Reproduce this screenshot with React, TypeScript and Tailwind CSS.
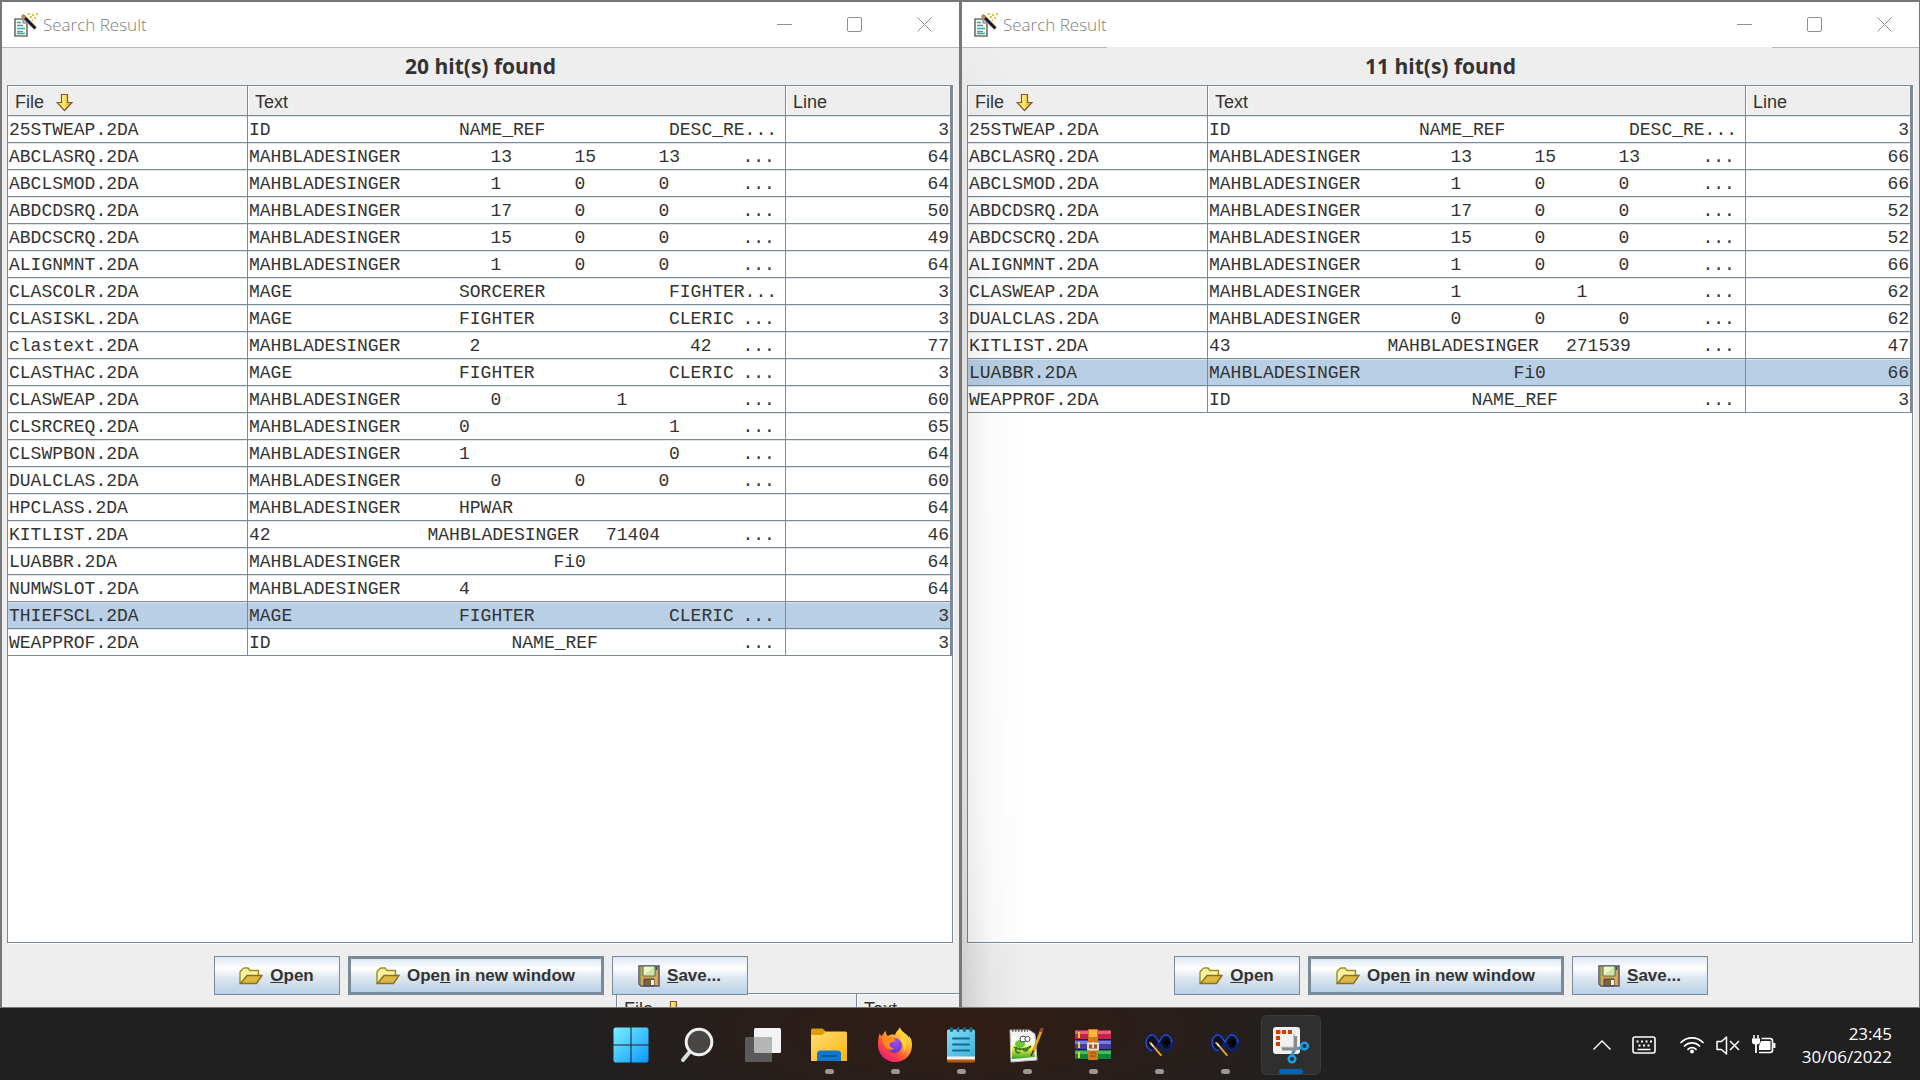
import type { ReactNode } from "react";

type Token = [column: number, text: string];
type Hit = { file: string; tokens: Token[]; line: number; selected?: boolean };

const MAHB: Token = [0, "MAHBLADESINGER"];
const MORE: Token = [47, "..."];

const leftHits: Hit[] = [
  { file: "25STWEAP.2DA", tokens: [[0, "ID"], [20, "NAME_REF"], [40, "DESC_RE..."]], line: 3 },
  { file: "ABCLASRQ.2DA", tokens: [MAHB, [23, "13"], [31, "15"], [39, "13"], MORE], line: 64 },
  { file: "ABCLSMOD.2DA", tokens: [MAHB, [23, "1"], [31, "0"], [39, "0"], MORE], line: 64 },
  { file: "ABDCDSRQ.2DA", tokens: [MAHB, [23, "17"], [31, "0"], [39, "0"], MORE], line: 50 },
  { file: "ABDCSCRQ.2DA", tokens: [MAHB, [23, "15"], [31, "0"], [39, "0"], MORE], line: 49 },
  { file: "ALIGNMNT.2DA", tokens: [MAHB, [23, "1"], [31, "0"], [39, "0"], MORE], line: 64 },
  { file: "CLASCOLR.2DA", tokens: [[0, "MAGE"], [20, "SORCERER"], [40, "FIGHTER..."]], line: 3 },
  { file: "CLASISKL.2DA", tokens: [[0, "MAGE"], [20, "FIGHTER"], [40, "CLERIC"], MORE], line: 3 },
  { file: "clastext.2DA", tokens: [MAHB, [21, "2"], [42, "42"], MORE], line: 77 },
  { file: "CLASTHAC.2DA", tokens: [[0, "MAGE"], [20, "FIGHTER"], [40, "CLERIC"], MORE], line: 3 },
  { file: "CLASWEAP.2DA", tokens: [MAHB, [23, "0"], [35, "1"], MORE], line: 60 },
  { file: "CLSRCREQ.2DA", tokens: [MAHB, [20, "0"], [40, "1"], MORE], line: 65 },
  { file: "CLSWPBON.2DA", tokens: [MAHB, [20, "1"], [40, "0"], MORE], line: 64 },
  { file: "DUALCLAS.2DA", tokens: [MAHB, [23, "0"], [31, "0"], [39, "0"], MORE], line: 60 },
  { file: "HPCLASS.2DA", tokens: [MAHB, [20, "HPWAR"]], line: 64 },
  { file: "KITLIST.2DA", tokens: [[0, "42"], [17, "MAHBLADESINGER"], [34, "71404"], MORE], line: 46 },
  { file: "LUABBR.2DA", tokens: [MAHB, [29, "Fi0"]], line: 64 },
  { file: "NUMWSLOT.2DA", tokens: [MAHB, [20, "4"]], line: 64 },
  { file: "THIEFSCL.2DA", tokens: [[0, "MAGE"], [20, "FIGHTER"], [40, "CLERIC"], MORE], line: 3, selected: true },
  { file: "WEAPPROF.2DA", tokens: [[0, "ID"], [25, "NAME_REF"], MORE], line: 3 },
];

const rightHits: Hit[] = [
  { file: "25STWEAP.2DA", tokens: [[0, "ID"], [20, "NAME_REF"], [40, "DESC_RE..."]], line: 3 },
  { file: "ABCLASRQ.2DA", tokens: [MAHB, [23, "13"], [31, "15"], [39, "13"], MORE], line: 66 },
  { file: "ABCLSMOD.2DA", tokens: [MAHB, [23, "1"], [31, "0"], [39, "0"], MORE], line: 66 },
  { file: "ABDCDSRQ.2DA", tokens: [MAHB, [23, "17"], [31, "0"], [39, "0"], MORE], line: 52 },
  { file: "ABDCSCRQ.2DA", tokens: [MAHB, [23, "15"], [31, "0"], [39, "0"], MORE], line: 52 },
  { file: "ALIGNMNT.2DA", tokens: [MAHB, [23, "1"], [31, "0"], [39, "0"], MORE], line: 66 },
  { file: "CLASWEAP.2DA", tokens: [MAHB, [23, "1"], [35, "1"], MORE], line: 62 },
  { file: "DUALCLAS.2DA", tokens: [MAHB, [23, "0"], [31, "0"], [39, "0"], MORE], line: 62 },
  { file: "KITLIST.2DA", tokens: [[0, "43"], [17, "MAHBLADESINGER"], [34, "271539"], MORE], line: 47 },
  { file: "LUABBR.2DA", tokens: [MAHB, [29, "Fi0"]], line: 66, selected: true },
  { file: "WEAPPROF.2DA", tokens: [[0, "ID"], [25, "NAME_REF"], MORE], line: 3 },
];

/* ---------- window icons ---------- */

function AppIcon() {
  return (
    <svg width="24" height="24" viewBox="0 0 24 24" aria-hidden="true">
      <path d="M1 6h8l4 4v13H1z" fill="#fdfdfd" stroke="#6f7068" strokeWidth="1.6" />
      <path d="M9 6v4h4" fill="#d8d8d0" stroke="#6f7068" />
      <path d="M3 9.500h4M3 12.500h6M3 15.500h8M3 18.500h6M3 20.500h8" stroke="#3fa7a0" strokeWidth="1.300" />
      <path d="M8.500 2.500L21 15" stroke="#b9bcc4" strokeWidth="4" />
      <path d="M8.500 2.500L21.500 15.500" stroke="#1b1b20" strokeWidth="2.800" />
      <path d="M8 2l3 3" stroke="#c98a54" strokeWidth="2.800" />
      <path d="M14 1h2M18 2h2M22 1h2M16 4h2M20 5h2M18 7h1" stroke="#e6bf2c" strokeWidth="2" />
    </svg>
  );
}

function SortArrow() {
  return (
    <svg width="18" height="19" viewBox="0 0 18 19" aria-hidden="true">
      <defs>
        <linearGradient id="sortFill" x1="0" x2="1">
          <stop offset="0" stopColor="#f0c020" />
          <stop offset=".4" stopColor="#fff27a" />
          <stop offset="1" stopColor="#d99a10" />
        </linearGradient>
      </defs>
      <path d="M5.500 1.500h6v8h4.500L8.500 17.500 1 9.500h4.500z" fill="url(#sortFill)" stroke="#8a5a2c" strokeWidth="1.200" />
    </svg>
  );
}

function FolderIcon() {
  return (
    <svg width="24" height="18" viewBox="0 0 24 18" aria-hidden="true">
      <path d="M1 16V5l2.500-3L5 1h4l2 2.500h8.500V8L3.500 16z" fill="#fdf0a0" stroke="#96901c" strokeWidth="1.400" />
      <path d="M1.500 16.500L8 8.500h15l-5.500 8z" fill="#deb83e" stroke="#84702a" strokeWidth="1.400" />
    </svg>
  );
}

function FloppyIcon() {
  return (
    <svg width="22" height="22" viewBox="0 0 22 22" aria-hidden="true">
      <path d="M1 1h20v20H3l-2-2z" fill="#d8a850" stroke="#57506a" strokeWidth="1.500" />
      <path d="M2 2v17" stroke="#6f8f50" strokeWidth="1.500" />
      <path d="M5 1h12v10H5z" fill="#eef5cf" stroke="#4c6a48" />
      <path d="M6 10l10-8v8z" fill="#d5e4a4" />
      <path d="M18.500 2v3" stroke="#3f3a5a" strokeWidth="1.500" />
      <path d="M6 14h10v7H6z" fill="#7d6240" stroke="#4d4050" />
      <path d="M13 15h3v5h-3z" fill="#f3efe2" />
    </svg>
  );
}

/* ---------- search window ---------- */

const HEAD_CELL =
  "border-r border-b border-[#7a8a99] bg-[#eeeeee] pt-[3px] pb-0 pl-[7px] text-left align-middle text-[18px] leading-[24px] font-normal text-[#333333] shadow-[inset_1px_1px_0_#ffffff]";
const BODY_CELL =
  "h-[27px] border-r border-b border-[#7a8a99] px-0 pt-[2px] pb-0 align-middle leading-[24px] shadow-[inset_0_1px_0_#dfe4e9]";

function HitTable({ hits }: { hits: Hit[] }) {
  return (
    <table className="w-full table-fixed border-separate border-spacing-0 border-r border-[#7a8a99]">
      <colgroup>
        <col className="w-[240px]" />
        <col />
        <col className="w-[165px]" />
      </colgroup>
      <thead>
        <tr className="h-[30px]">
          <th scope="col" className={HEAD_CELL}>
            <span className="flex items-center gap-3">
              File
              <SortArrow />
            </span>
          </th>
          <th scope="col" className={HEAD_CELL}>Text</th>
          <th scope="col" className={HEAD_CELL}>Line</th>
        </tr>
      </thead>
      <tbody className="font-['Liberation_Mono',monospace] text-[18px] text-[#333333]">
        {hits.map((hit) => (
          <tr key={hit.file} className={hit.selected ? "bg-[#b8cfe5]" : "bg-white"}>
            <td className={BODY_CELL}>
              <span className="pl-px">{hit.file}</span>
            </td>
            <td className={BODY_CELL}>
              <div className="grid grid-cols-[repeat(50,minmax(0,1fr))] pr-[11px] pl-px">
                {hit.tokens.map(([column, text]) => (
                  <span
                    key={column}
                    className="row-start-1 whitespace-pre"
                    style={{ gridColumnStart: column + 1, gridColumnEnd: column + 1 + Math.min(text.length, 50 - column) }}
                  >
                    {text}
                  </span>
                ))}
              </div>
            </td>
            <td className={BODY_CELL}>
              <div className="pr-px text-right">{hit.line}</div>
            </td>
          </tr>
        ))}
      </tbody>
    </table>
  );
}

function SwingButton({
  icon,
  children,
  size,
}: {
  icon: ReactNode;
  children: ReactNode;
  size: "min-w-[126px] border" | "min-w-[256px] border-3" | "min-w-[136px] border";
}) {
  return (
    <button
      type="button"
      className={
        "flex h-[39px] items-center justify-center gap-[7px] border-[#7a8a99] bg-[linear-gradient(#dde8f3_0%,#ffffff_30%,#dfe8f2_55%,#b8cfe5_100%)] px-5 pt-px text-[17px] font-bold whitespace-nowrap text-[#333333] " +
        size
      }
    >
      {icon}
      <span>{children}</span>
    </button>
  );
}

function SearchWindow({ count, hits, overlapped }: { count: number; hits: Hit[]; overlapped?: boolean }) {
  return (
    <section className="relative flex min-w-0 flex-col border-t-2 border-r border-b border-l-2 border-[#777777] bg-[#eeeeee]">
      <header className="flex h-[45px] shrink-0 items-center bg-white pl-3">
        <AppIcon />
        <h1 className="flex-1 pl-[5px] font-['Open_Sans',sans-serif] text-[17px] font-light text-[#808080]">Search Result</h1>
        <button type="button" aria-label="Minimize" className="flex h-full w-[70px] items-center justify-center">
          <svg width="15" height="15" viewBox="0 0 15 15"><path d="M0 7.500h15" stroke="#8f8f8f" /></svg>
        </button>
        <button type="button" aria-label="Maximize" className="flex h-full w-[70px] items-center justify-center">
          <svg width="15" height="15" viewBox="0 0 15 15"><rect x=".5" y=".5" width="14" height="14" rx="1.500" fill="none" stroke="#8f8f8f" /></svg>
        </button>
        <button type="button" aria-label="Close" className="flex h-full w-[70px] items-center justify-center">
          <svg width="15" height="15" viewBox="0 0 15 15"><path d="M.5.5l14 14M14.500.5l-14 14" stroke="#8f8f8f" /></svg>
        </button>
      </header>
      {overlapped ? (
        <div className="flex h-px shrink-0 justify-between">
          <span className="w-[145px] bg-[#b9b9b9]" />
          <span className="w-[147px] bg-[#b9b9b9]" />
        </div>
      ) : (
        <div className="h-px shrink-0 bg-[#b9b9b9]" />
      )}

      <h2 className="flex h-[37px] shrink-0 items-center justify-center font-['Open_Sans',sans-serif] text-[21px] font-bold text-[#333333]">
        {count} hit(s) found
      </h2>

      <div className="mr-[6px] ml-[5px] min-h-0 flex-1 border border-[#7a8a99] bg-white shadow-[1px_1px_0_#ffffff]">
        <HitTable hits={hits} />
      </div>

      <div className="relative flex h-16 shrink-0 items-start justify-center pt-[13px]">
        {!overlapped && (
          <div className="absolute right-0 bottom-0 left-[614px] flex h-[14px] overflow-hidden border-t border-l border-[#7a8a99] text-[18px] text-[#333333]">
            <div className="flex h-[30px] w-[240px] shrink-0 items-center gap-3 border-r border-[#7a8a99] pl-[7px] shadow-[inset_1px_1px_0_#ffffff]">
              File
              <SortArrow />
            </div>
            <div className="flex h-[30px] flex-1 items-center pl-[7px] shadow-[inset_1px_1px_0_#ffffff]">Text</div>
          </div>
        )}
        <div className="relative flex gap-2">
          <SwingButton icon={<FolderIcon />} size="min-w-[126px] border"><u>O</u>pen</SwingButton>
          <SwingButton icon={<FolderIcon />} size="min-w-[256px] border-3">Ope<u>n</u> in new window</SwingButton>
          <SwingButton icon={<FloppyIcon />} size="min-w-[136px] border"><u>S</u>ave...</SwingButton>
        </div>
      </div>

      {overlapped && (
        <div className="pointer-events-none absolute inset-y-0 left-0 w-16 bg-[linear-gradient(to_right,rgba(0,0,0,0.13),rgba(0,0,0,0.03)_45%,transparent)] [mask-image:linear-gradient(to_bottom,transparent,rgba(0,0,0,0.5)_30%,rgba(0,0,0,0.6)_80%,black)]" />
      )}
    </section>
  );
}

/* ---------- taskbar ---------- */

function StartIcon() {
  return (
    <svg width="36" height="36" viewBox="0 0 36 36" aria-hidden="true">
      <defs>
        <linearGradient id="startFill" x1="0" y1="0" x2="36" y2="36" gradientUnits="userSpaceOnUse">
          <stop offset="0" stopColor="#7ff0ff" />
          <stop offset=".5" stopColor="#42c4ff" />
          <stop offset="1" stopColor="#0a94ff" />
        </linearGradient>
      </defs>
      <path d="M2 .5h15.500v17H.5V2zM18.500.5H34L35.500 2v15.500h-17zM.5 18.500h17v17H2L.5 34zM18.500 18.500h17V34L34 35.500H18.500z" fill="url(#startFill)" />
    </svg>
  );
}

function SearchIcon() {
  return (
    <svg width="36" height="36" viewBox="0 0 36 36" aria-hidden="true">
      <path d="M11 24.500L4 33" stroke="#d9dcdf" strokeWidth="4" strokeLinecap="round" />
      <circle cx="20" cy="15" r="12.800" fill="#4a4545" stroke="#f0f0f0" strokeWidth="3" />
    </svg>
  );
}

function TaskViewIcon() {
  return (
    <svg width="36" height="36" viewBox="0 0 36 36" aria-hidden="true">
      <rect x="9" y="1" width="27" height="25" rx="1.500" fill="#f3f3f3" />
      <rect x="0" y="10" width="27" height="25" rx="1.500" fill="#5b5a5a" />
      <path d="M9 10h16.500q1.500 0 1.500 1.500V26H10.500Q9 26 9 24.500z" fill="#b5b5b5" />
    </svg>
  );
}

function ExplorerIcon() {
  return (
    <svg width="36" height="36" viewBox="0 0 36 36" aria-hidden="true">
      <defs>
        <linearGradient id="folderFill" x1="0" y1="0" x2="1" y2="1">
          <stop offset="0" stopColor="#ffdc73" />
          <stop offset="1" stopColor="#f9b710" />
        </linearGradient>
      </defs>
      <path d="M0 3q0-1.500 1.500-1.500h10L15.500 5H20v5H0z" fill="#e09c05" />
      <path d="M0 8h11l4-3.500h19.500Q36 4.500 36 6v28H0z" fill="url(#folderFill)" />
      <path d="M6 34v-7q0-3.500 3.500-3.500h17q3.500 0 3.500 3.500v7z" fill="#0f78cc" />
      <path d="M11 29h14" stroke="#0b4e94" strokeWidth="1.600" strokeLinecap="round" />
    </svg>
  );
}

function FirefoxIcon() {
  return (
    <svg width="36" height="36" viewBox="0 0 36 36" aria-hidden="true">
      <defs>
        <linearGradient id="ffBody" x1="30" y1="3" x2="6" y2="34" gradientUnits="userSpaceOnUse">
          <stop offset="0" stopColor="#fff04a" />
          <stop offset=".35" stopColor="#ffa92c" />
          <stop offset=".65" stopColor="#ff4a3c" />
          <stop offset="1" stopColor="#e31587" />
        </linearGradient>
        <radialGradient id="ffGlobe" cx=".6" cy=".2" r=".9">
          <stop offset="0" stopColor="#a04af0" />
          <stop offset="1" stopColor="#5a35c8" />
        </radialGradient>
      </defs>
      <path d="M23 0c-1 3-4 4-5 8-3-1-6 0-7 1-2-1-2-3-2-5-2 1-3 3-4 5C3 8 3 7 3 6 1 10 1 14 1 18c0 9 7 17 17 17s17-7 17-17c0-4-1-7-3-9 0 1 0 2 .5 3C31 6 24 6 23 0z" fill="url(#ffBody)" />
      <circle cx="17.500" cy="18.500" r="7.500" fill="url(#ffGlobe)" />
      <path d="M5 10c3-1 6 0 7 1 3-1 5 0 6 1 1 2-2 3-5 4-1 3 1 5 4 5-2 3-6 2-8 0-3-3-4-7-4-11z" fill="#ff8a22" />
      <path d="M25 6c6 6 6 14 1 21 2-6 0-11-3-14 1-2 2-4 2-7z" fill="#ffd438" />
    </svg>
  );
}

function NotepadIcon() {
  return (
    <svg width="30" height="36" viewBox="0 0 30 36" aria-hidden="true">
      <defs>
        <linearGradient id="noteFill" x1="0" y1="0" x2="1" y2="1">
          <stop offset="0" stopColor="#86dcf5" />
          <stop offset="1" stopColor="#3fb0d8" />
        </linearGradient>
      </defs>
      <path d="M1 30h28v4q0 1.500-1.500 1.500h-25Q1 35.500 1 34z" fill="#b5560c" />
      <path d="M1 28h28v4.500H1z" fill="#f4f4f4" />
      <path d="M1 4q0-1.500 1.500-1.500h25Q29 2.500 29 4v25.500H1z" fill="url(#noteFill)" />
      <path d="M5.500 1.500v2M12 1.500v2M18.500 1.500v2M25 1.500v2" stroke="#0c6f95" strokeWidth="3" strokeLinecap="round" />
      <path d="M7 11.500h16M7 17.500h16M7 23.500h16" stroke="#0c6f95" strokeWidth="2" strokeLinecap="round" />
    </svg>
  );
}

function NotepadPlusIcon() {
  return (
    <svg width="36" height="36" viewBox="0 0 36 36" aria-hidden="true">
      <defs>
        <linearGradient id="nppFill" x1="0" y1="0" x2="0" y2="1">
          <stop offset=".3" stopColor="#fbfdf2" />
          <stop offset=".55" stopColor="#f0ec4a" />
          <stop offset="1" stopColor="#2f9e2a" />
        </linearGradient>
      </defs>
      <path d="M1 3h19l6 4 2 26-26 2z" fill="#f2f2f2" stroke="#b9b9b9" />
      <path d="M3 9h21l2 21-23 2z" fill="url(#nppFill)" />
      <path d="M3 3.500h16" stroke="#555" strokeWidth="2.500" strokeDasharray="1.500 1.500" />
      <ellipse cx="11" cy="17" rx="5" ry="4" fill="#67c83c" />
      <path d="M5 20c4 3 13 3 17-1M8 20c-3 4 0 7 3 5M14 21c1 4 4 3 5 1" fill="none" stroke="#3d7d25" strokeWidth="2" />
      <circle cx="14" cy="12" r="3" fill="#fff" stroke="#444" />
      <circle cx="18.500" cy="12" r="2.600" fill="#fff" stroke="#444" />
      <path d="M33 2L24 25" stroke="#e4a018" strokeWidth="2.800" />
      <path d="M33.500 1l-1.500 4" stroke="#8d3d4c" strokeWidth="2.800" />
      <path d="M24.500 23.500L22 29" stroke="#3a3226" strokeWidth="1.500" />
    </svg>
  );
}

function WinRarIcon() {
  return (
    <svg width="36" height="32" viewBox="0 0 36 32" aria-hidden="true">
      <rect y="1" width="36" height="10" fill="#c22348" />
      <rect y="2" width="36" height="3" fill="#e8607e" />
      <rect y="11" width="36" height="10" fill="#4140a4" />
      <rect y="12" width="36" height="3" fill="#7d7cdc" />
      <rect y="21" width="36" height="10" fill="#15823a" />
      <rect y="22" width="36" height="3" fill="#48bb62" />
      <path d="M0 10.500h36M0 20.500h36M0 30.500h36" stroke="#1c1c2c" />
      <path d="M4 3v6M4 13v6M4 23v6" stroke="#f5c928" strokeWidth="2" />
      <rect x="13" y="0" width="10" height="31" rx="1" fill="#d07a1c" />
      <path d="M14 1h8v7h-8z" fill="#f3b83c" />
      <rect x="13" y="14.500" width="10" height="6" fill="#a6551a" stroke="#e9e9e9" strokeWidth="1.800" />
      <path d="M18 13v6" stroke="#f4e6c0" strokeWidth="1.800" />
      <path d="M15 24h6M15 27h6" stroke="#8a4a14" />
    </svg>
  );
}

function InfinityIcon() {
  return (
    <svg width="30" height="24" viewBox="0 0 32 26" aria-hidden="true">
      <path d="M16 10C12 3 10.500 2 8.500 2 5 2 2 6 2 10.500S5 19 8.500 19 14 14 16 10s4-8 7.500-8 6.500 4 6.500 8.500-3 8.500-6.500 8.500S18 14 16 10z" fill="#101014" stroke="#0b2170" strokeWidth="3.200" />
      <path d="M16 10C12 3 10.500 2 8.500 2 5 2 2 6 2 10.500S5 19 8.500 19M16 10c2-4 4-8 7.500-8s6.500 4 6.500 8.500" fill="none" stroke="#3f6be0" strokeWidth="1" />
      <path d="M21 10.500h7M24.500 7v7" stroke="#000" strokeWidth="2.400" />
      <path d="M7 11l11 13" stroke="#e9a72c" strokeWidth="2" strokeLinecap="round" />
      <path d="M6.500 10.500l3 3.500" stroke="#f7f1dc" strokeWidth="1.800" strokeLinecap="round" />
      <path d="M6.500 10.500h1" stroke="#d33" strokeWidth="1.500" />
    </svg>
  );
}

function SnipIcon() {
  return (
    <svg width="38" height="38" viewBox="0 0 38 38" aria-hidden="true">
      <rect x="1" y="1" width="27" height="27" rx="3" fill="#f2f1f1" />
      <path d="M4 4h4.500v4H4zM10 4h4v4h-4zM16 4h4v4h-4zM4 10h4v4H4zM4 16h4v4H4z" fill="#d83b01" />
      <path d="M22 8v14M9 21.500h12" stroke="#c9c9c9" strokeWidth="2" fill="none" />
      <path d="M23.500 10v12q-1 2-3 6M10 23h13l6-1" stroke="#858b92" strokeWidth="3.200" fill="none" />
      <circle cx="32.500" cy="20" r="3.300" fill="none" stroke="#1e9de4" strokeWidth="2.400" />
      <circle cx="20" cy="33" r="3.300" fill="none" stroke="#1e9de4" strokeWidth="2.400" />
      <path d="M20 29.500l1.500-4M26 22l3.500-.5" stroke="#1e9de4" strokeWidth="2.200" />
    </svg>
  );
}

type App = { name: string; icon: ReactNode; state: "idle" | "running" | "active" };

const apps: App[] = [
  { name: "Start", icon: <StartIcon />, state: "idle" },
  { name: "Search", icon: <SearchIcon />, state: "idle" },
  { name: "Task View", icon: <TaskViewIcon />, state: "idle" },
  { name: "File Explorer", icon: <ExplorerIcon />, state: "running" },
  { name: "Firefox", icon: <FirefoxIcon />, state: "running" },
  { name: "Notepad", icon: <NotepadIcon />, state: "running" },
  { name: "Notepad++", icon: <NotepadPlusIcon />, state: "running" },
  { name: "WinRAR", icon: <WinRarIcon />, state: "running" },
  { name: "Near Infinity", icon: <InfinityIcon />, state: "running" },
  { name: "Near Infinity, second window", icon: <InfinityIcon />, state: "running" },
  { name: "Snipping Tool", icon: <SnipIcon />, state: "active" },
];

function TaskbarButton({ app }: { app: App }) {
  return (
    <button
      type="button"
      aria-label={app.name}
      className={
        "relative mx-[3px] flex h-[60px] w-[60px] items-center justify-center rounded-md " +
        (app.state === "active" ? "border border-[#3d3c3c] bg-[#2f2f2f]" : "")
      }
    >
      {app.icon}
      {app.state === "running" && <span className="absolute bottom-px h-[5px] w-[9px] rounded-full bg-[#9b9796]" />}
      {app.state === "active" && <span className="absolute bottom-0 h-[5px] w-6 rounded-full bg-[#0063b5]" />}
    </button>
  );
}

function Tray() {
  return (
    <div className="flex items-center justify-end pr-7 text-white">
      <button type="button" aria-label="Show hidden icons">
        <svg width="18" height="24" viewBox="0 0 18 24"><path d="M.5 16.500L9 8l8.500 8.500" fill="none" stroke="currentColor" strokeWidth="1.400" /></svg>
      </button>
      <button type="button" aria-label="Touch keyboard" className="ml-[21px]">
        <svg width="24" height="24" viewBox="0 0 24 24">
          <rect x="1" y="4" width="22" height="16" rx="2" fill="none" stroke="currentColor" strokeWidth="1.600" />
          <path d="M4.500 8.500h2M9 8.500h2M13.500 8.500h2M18 8.500h2M6.500 12.500h2M11 12.500h2M15.500 12.500h2" stroke="currentColor" strokeWidth="2" />
          <path d="M5.500 16.500h13" stroke="currentColor" strokeWidth="1.500" />
        </svg>
      </button>
      <button type="button" aria-label="Network, volume and battery" className="ml-6 flex gap-3">
        <svg width="24" height="24" viewBox="0 0 24 24" fill="none" stroke="currentColor" strokeWidth="1.700" strokeLinecap="round">
          <path d="M1 9.500a15.500 15.500 0 0 1 22 0M4.500 13a10.500 10.500 0 0 1 15 0M8 16.300a5.700 5.700 0 0 1 8 0" />
          <circle cx="12" cy="18.500" r="1.900" fill="currentColor" stroke="none" />
        </svg>
        <svg width="24" height="24" viewBox="0 0 24 24" fill="none" stroke="currentColor" strokeWidth="1.500">
          <path d="M1 8.500h4.500L10.500 4v17l-5-4.500H1z" strokeLinejoin="round" />
          <path d="M14 8l9 9M23 8l-9 9" />
        </svg>
        <svg width="24" height="24" viewBox="0 0 24 24" fill="none" stroke="currentColor">
          <path d="M9.500 5.500H18q2.500 0 2.500 2.500v9q0 2.500-2.500 2.500H7" strokeWidth="1.600" />
          <path d="M22.300 10v5" strokeWidth="2.200" />
          <path d="M9 8h9.500v9H7v-4z" fill="currentColor" stroke="none" />
          <path d="M2 2v4M6 2v4" strokeWidth="1.500" />
          <path d="M0 5.500h8V9q0 2.500-4 2.500T0 9z" fill="currentColor" stroke="none" />
          <path d="M4 11v9" strokeWidth="1.800" />
        </svg>
      </button>
      <time className="ml-[26px] text-right text-[17px] leading-[23px]">
        23:45
        <br />
        30/06/2022
      </time>
    </div>
  );
}

function Taskbar() {
  return (
    <nav
      aria-label="Taskbar"
      className="grid h-[72px] shrink-0 grid-cols-[1fr_auto_1fr] items-center bg-[#202020] bg-[radial-gradient(ellipse_400px_110px_at_50%_30%,#321c14,transparent)] pt-0.5 pl-0.5 font-['Open_Sans',sans-serif]"
    >
      <div />
      <div className="flex">
        {apps.map((app) => (
          <TaskbarButton key={app.name} app={app} />
        ))}
      </div>
      <Tray />
    </nav>
  );
}

export default function App() {
  return (
    <div className="flex h-screen flex-col overflow-hidden bg-[#202020] font-['Liberation_Sans',sans-serif]">
      <main className="grid min-h-0 flex-1 grid-cols-2">
        <SearchWindow count={20} hits={leftHits} />
        <SearchWindow count={11} hits={rightHits} overlapped />
      </main>
      <Taskbar />
    </div>
  );
}
